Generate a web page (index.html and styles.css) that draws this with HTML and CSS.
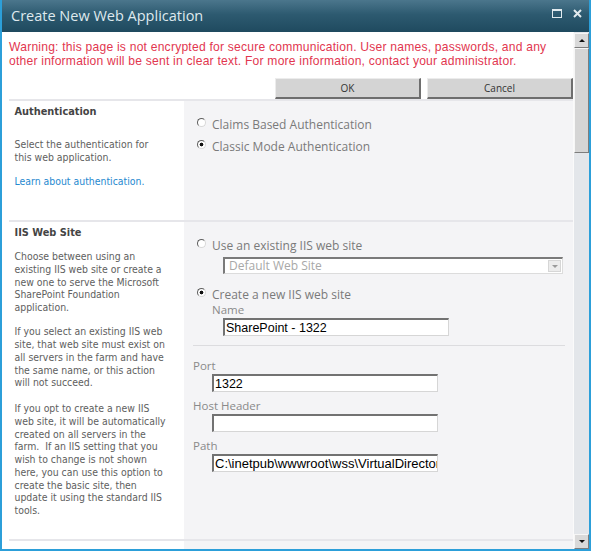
FILE: index.html
```html
<!DOCTYPE html>
<html>
<head>
<meta charset="utf-8">
<title>Create New Web Application</title>
<link rel="stylesheet" href="styles.css">
</head>
<body>
<div class="window">
  <header class="titlebar">
    <span class="title">Create New Web Application</span>
    <span class="win-ctrls">
      <svg class="ic-max" width="10" height="9" viewBox="0 0 10 9"><rect x="0.5" y="0.5" width="9" height="8" fill="none" stroke="#e2ebef"/><rect x="0" y="0" width="10" height="2" fill="#e2ebef"/></svg>
      <svg class="ic-close" width="9" height="9" viewBox="0 0 9 9"><path d="M1 1L8 8M8 1L1 8" stroke="#e2ebef" stroke-width="2"/></svg>
    </span>
  </header>
  <div class="frame">
    <main class="content">
      <p class="warning">Warning: this page is not encrypted for secure communication. User names, passwords, and any<br>other information will be sent in clear text. For more information, contact your administrator.</p>
      <div class="actions">
        <button class="btn">OK</button>
        <button class="btn">Cancel</button>
      </div>

      <section class="sec">
        <div class="sec-left sec-left-auth">
          <h3 class="sec-title">Authentication</h3>
          <p class="desc desc-auth">Select the authentication for<br>this web application.</p>
          <a class="learn">Learn about authentication.</a>
        </div>
        <div class="sec-right">
          <div class="opt"><span class="radio"></span><span class="opt-label">Claims Based Authentication</span></div>
          <div class="opt opt-next"><span class="radio on"></span><span class="opt-label">Classic Mode Authentication</span></div>
        </div>
      </section>

      <section class="sec">
        <div class="sec-left sec-left-iis">
          <h3 class="sec-title">IIS Web Site</h3>
          <p class="desc desc-p1">Choose between using an<br>existing IIS web site or create a<br>new one to serve the Microsoft<br>SharePoint Foundation<br>application.</p>
          <p class="desc desc-p2">If you select an existing IIS web<br>site, that web site must exist on<br>all servers in the farm and have<br>the same name, or this action<br>will not succeed.</p>
          <p class="desc desc-p3">If you opt to create a new IIS<br>web site, it will be automatically<br>created on all servers in the<br>farm.&nbsp; If an IIS setting that you<br>wish to change is not shown<br>here, you can use this option to<br>create the basic site, then<br>update it using the standard IIS<br>tools.</p>
        </div>
        <div class="sec-right">
          <div class="opt"><span class="radio"></span><span class="opt-label">Use an existing IIS web site</span></div>
          <div class="select"><span class="select-text">Default Web Site</span><span class="select-btn"><span class="tri-down-gray"></span></span></div>
          <div class="opt opt-create"><span class="radio on"></span><span class="opt-label">Create a new IIS web site</span></div>
          <div class="field-label name-label">Name</div>
          <input class="text-in in-name" type="text" value="SharePoint - 1322">
          <div class="rule"></div>
          <div class="field-label field-first">Port</div>
          <input class="text-in in-field" type="text" value="1322">
          <div class="field-label field-next">Host Header</div>
          <input class="text-in in-field" type="text" value="">
          <div class="field-label field-next">Path</div>
          <input class="text-in in-field in-path" type="text" value="C:\inetpub\wwwroot\wss\VirtualDirectories\1322">
        </div>
      </section>

      <section class="sec sec-more">
        <div class="sec-left"></div>
        <div class="sec-right"></div>
      </section>
    </main>
    <div class="scrollbar">
      <div class="sb-btn sb-up"><span class="tri-up"></span></div>
      <div class="sb-thumb"></div>
      <div class="sb-track"></div>
      <div class="sb-btn"><span class="tri-down"></span></div>
    </div>
  </div>
</div>
</body>
</html>
```
FILE: styles.css
```css
html, body { margin: 0; padding: 0; background: #fff; }

.window {
  width: 591px;
  height: 551px;
  box-sizing: border-box;
  border: 2px solid #2c9fd9;
  border-top: 0;
  display: flex;
  flex-direction: column;
  background: #fff;
  overflow: hidden;
}

/* ---------- title bar ---------- */
.titlebar {
  height: 32px;
  flex: none;
  display: flex;
  align-items: flex-start;
  padding-left: 9px;
  background: linear-gradient(#4b768c, #2d5a70 45%, #1f4a5f);
}
.title {
  flex: 1;
  font: 14.5px/31px "Open Sans", sans-serif;
  color: #dfe9ee;
}
.win-ctrls {
  display: flex;
  align-items: flex-start;
  gap: 11px;
  margin-top: 9px;
  margin-right: 7px;
}
.win-ctrls svg { display: block; }

/* ---------- frame ---------- */
.frame {
  flex: 1;
  min-height: 0;
  display: flex;
}
.content {
  flex: 1;
  min-width: 0;
  overflow: hidden;
  padding: 8px 0 0 7px;
}

.warning {
  margin: 0;
  font: 12.1px/14px "Liberation Sans", sans-serif;
  letter-spacing: 0.22px;
  color: #e2364f;
  white-space: nowrap;
}

.actions {
  display: flex;
  justify-content: flex-end;
  gap: 6px;
  margin-top: 10px;
}
.btn {
  width: 146px;
  height: 21px;
  box-sizing: border-box;
  padding: 0;
  background: #d4d4d4;
  border-style: solid;
  border-width: 1px 2px 2px 1px;
  border-color: #ececec #6e6e6e #6e6e6e #ececec;
  font: 10px/1 "Open Sans", sans-serif;
  color: #333;
}

/* ---------- sections ---------- */
.sec {
  display: flex;
  border-top: 2px solid #e6e6ea;
}
.sec-left {
  width: 175px;
  flex: none;
  box-sizing: border-box;
  padding: 3px 5px 0 5.5px;
  background: #fff;
}
.sec-right {
  flex: 1;
  min-width: 0;
  background: #f4f4f6;
  padding: 17px 8px 0 9px;
}
.sec-left-auth { padding-bottom: 32px; }
.sec-left-iis { padding-bottom: 22px; }
.sec-more .sec-left, .sec-more .sec-right { height: 40px; padding: 0; }

.sec-title {
  margin: 0;
  font: bold 10.9px/15px "DejaVu Sans Condensed", sans-serif;
  color: #444;
}
.desc {
  margin: 0;
  font: 10.4px/12.75px "DejaVu Sans Condensed", sans-serif;
  color: #5e5e5e;
}
.desc-auth { margin-top: 19px; line-height: 13px; }
.desc-p1 { margin-top: 10px; }
.desc-p2 { margin-top: 11.5px; }
.desc-p3 { margin-top: 13px; }
.learn {
  display: block;
  margin-top: 11px;
  font: 10.4px/13px "DejaVu Sans Condensed", sans-serif;
  color: #2689cf;
}

/* ---------- options ---------- */
.opt {
  display: flex;
  align-items: flex-start;
}
.opt-next { margin-top: 8px; }
.opt-create { margin-top: 14px; }
.radio {
  width: 9px;
  height: 9px;
  box-sizing: border-box;
  margin: 0 6px 0 4px;
  border-radius: 50%;
  border: 1px solid;
  border-color: #5e5e5e #d8d8d8 #d8d8d8 #5e5e5e;
  background: #fff;
  flex: none;
}
.radio.on {
  background: radial-gradient(circle, #111 0 1.6px, #fff 2.2px);
}
.opt-label {
  font: 12px/14px "Open Sans", sans-serif;
  color: #7a7a7a;
}

.select {
  margin: 4px 0 0 30px;
  width: 340px;
  height: 17px;
  box-sizing: border-box;
  border-style: solid;
  border-width: 2px 1px 1px 2px;
  border-color: #7a7a7a #dcdcdc #dcdcdc #7a7a7a;
  background: #fff;
  display: flex;
  align-items: center;
}
.select-text {
  flex: 1;
  padding-left: 4px;
  font: 12px/14px "Open Sans", sans-serif;
  color: #a8a8a8;
}
.select-btn {
  width: 13px;
  height: 12px;
  margin-right: 1px;
  box-sizing: border-box;
  border: 1px solid #d6d6d6;
  background: #ececec;
  display: flex;
  align-items: center;
  justify-content: center;
}
.tri-down-gray {
  width: 0; height: 0;
  border-left: 3px solid transparent;
  border-right: 3px solid transparent;
  border-top: 3px solid #9a9a9a;
}

.field-label {
  font: 11.5px/13px "Open Sans", sans-serif;
  color: #8a8a8a;
}
.name-label { margin: 1px 0 0 19px; }
.field-first { margin-top: 13px; }
.field-next { margin-top: 7px; }

.text-in {
  display: block;
  width: 226px;
  height: 18px;
  box-sizing: border-box;
  margin-top: 2px;
  padding: 0 0 0 1px;
  border-style: solid;
  border-width: 2px 1px 1px 2px;
  border-color: #727272 #d6d6d6 #d6d6d6 #727272;
  background: #fff;
  font: 12.5px "Liberation Sans", sans-serif;
  color: #000;
  outline: none;
}
.in-name { margin-left: 30px; }
.in-field { margin-left: 19px; }
.in-path { font-size: 13px; }

.rule {
  height: 1px;
  background: #dcdcdf;
  margin-top: 9px;
}

/* ---------- scrollbar ---------- */
.scrollbar {
  width: 16px;
  flex: none;
  box-sizing: border-box;
  border-left: 1px solid #fafafa;
  display: flex;
  flex-direction: column;
  background: #e3e6ea;
  padding-top: 1px;
}
.sb-btn, .sb-thumb {
  box-sizing: border-box;
  border-style: solid;
  border-width: 1px;
  border-color: #f6f6f6 #7d7d7d #7d7d7d #f6f6f6;
  background: #d9d9d9;
}
.sb-btn {
  height: 15px;
  flex: none;
  display: flex;
  align-items: center;
  justify-content: center;
}
.sb-thumb { height: 105px; flex: none; background: #d5d5d5; }
.sb-track { flex: 1; }
.tri-up {
  width: 0; height: 0;
  border-left: 3.5px solid transparent;
  border-right: 3.5px solid transparent;
  border-bottom: 3.5px solid #111;
}
.tri-down {
  width: 0; height: 0;
  border-left: 3.5px solid transparent;
  border-right: 3.5px solid transparent;
  border-top: 3.5px solid #111;
}
```
